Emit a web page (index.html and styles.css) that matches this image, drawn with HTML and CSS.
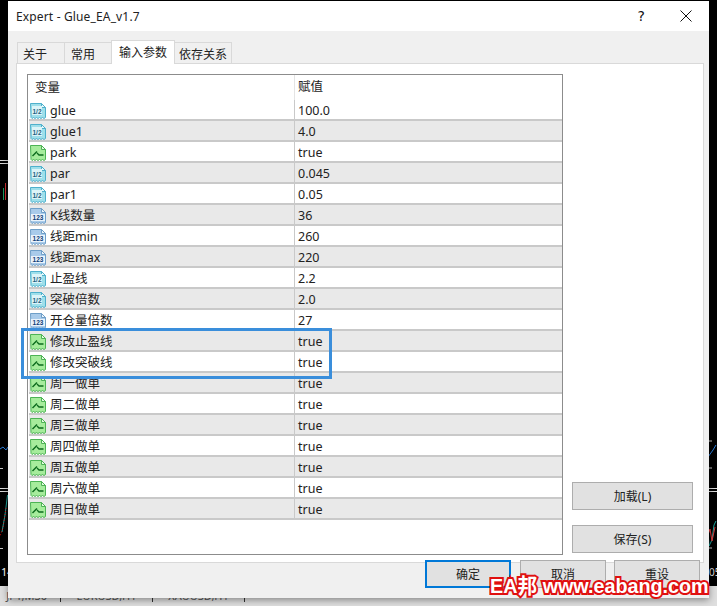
FILE: index.html
```html
<!DOCTYPE html>
<html lang="zh">
<head>
<meta charset="utf-8">
<title>Expert - Glue_EA_v1.7</title>
<link rel="stylesheet" href="styles.css">
</head>
<body>
<svg width="0" height="0" class="defs">
  <defs>
    <symbol id="i-half" viewBox="0 0 16 16">
      <path d="M.5 .5h11l4 4v10l-1.500 1-1.500-1-1.500 1-1.500-1-1.500 1-1.500-1-1.500 1-1.500-1-1.500 1-1-1z" fill="#9fdfea" stroke="#4fb0cc"/>
      <path d="M11.500 .5v4h4z" fill="#e8f8fb" stroke="#4fb0cc"/>
      <rect x="2" y="3" width="10" height="9" fill="#dcf4f8"/>
      <text x="7" y="10.500" class="ico-text half-text" text-anchor="middle">1/2</text>
    </symbol>
    <symbol id="i-bool" viewBox="0 0 16 16">
      <path d="M.5 .5h11l4 4v10l-1.500 1-1.500-1-1.500 1-1.500-1-1.500 1-1.500-1-1.500 1-1.500-1-1.500 1-1-1z" fill="#a6ec9c" stroke="#4db355"/>
      <path d="M11.500 .5v4h4z" fill="#e6fbe1" stroke="#4db355"/>
      <path d="M2.500 11l4.500-4.500" fill="none" stroke="#0c6a1d" stroke-width="1.500"/>
      <path d="M7 8l2 2h4.500" fill="none" stroke="#0c6a1d" stroke-width="1.300"/>
    </symbol>
    <symbol id="i-int" viewBox="0 0 16 16">
      <path d="M.5 .5h11l4 4v10l-1.500 1-1.500-1-1.500 1-1.500-1-1.500 1-1.500-1-1.500 1-1.500-1-1.500 1-1-1z" fill="#a9cbea" stroke="#6f9fc8"/>
      <path d="M11.500 .5v4h4z" fill="#edf5fc" stroke="#6f9fc8"/>
      <rect x="1" y="6" width="14" height="7" fill="#eaf3fb"/>
      <text x="8" y="12" class="ico-text int-text" text-anchor="middle">123</text>
    </symbol>
  </defs>
</svg>

<div class="desktop">
  <div class="chart chart-left">
    <svg viewBox="0 0 8 598" width="8" height="598" class="chart-svg">
      <path d="M0 160.500h8M0 163.500h8M0 488.500h8M0 491.500h8" stroke="#ddd" fill="none"/>
      <path d="M0 468.500h3M0 548.500h3" stroke="#ccc" fill="none"/>
      <path d="M5.500 183v17" stroke="#d03030" fill="none"/>
      <path d="M3.500 188v12" stroke="#1f9a60" fill="none"/>
      <path d="M0 449l3-2 3 3 2-3" stroke="#2c80e0" fill="none"/>
      <path d="M7.500 495L5 515 2 532" stroke="#1fa8a0" fill="none"/>
      <path d="M6 508L3 528 0 536" stroke="#f01010" fill="none" stroke-dasharray="1 2"/>
    </svg>
    <span class="axis-left">14</span>
  </div>
  <div class="chart chart-right">
    <svg viewBox="0 0 9 598" width="9" height="598" class="chart-svg">
      <path d="M1 441h3M1 468h3M0 548h4" stroke="#ccc" fill="none"/>
      <path d="M0 457l5-7 3-5" stroke="#2c80e0" fill="none"/>
      <path d="M0 488.500h9M0 491.500h9" stroke="#ddd" fill="none"/>
      <path d="M0 530l1 16 3-6 2-15 2-4" stroke="#1fa8a0" fill="none"/>
      <path d="M0 535l2-6 2 12 3-14" stroke="#e03a3a" fill="none"/>
    </svg>
    <span class="axis-right">05</span>
  </div>
  <div class="tabstrip">
    <span class="strip-item">JPY,M30</span>
    <span class="strip-item">EURUSD,H1</span>
    <span class="strip-item">XAUUSD,H1</span>
  </div>
</div>

<div class="window">
  <div class="titlebar">
    <span class="title">Expert - Glue_EA_v1.7</span>
    <span class="help">?</span>
    <svg class="close" width="12" height="12" viewBox="0 0 12 12"><path d="M.5.5l11 11M11.500.5l-11 11" stroke="#111" fill="none"/></svg>
  </div>
  <div class="client">
    <div class="tabs">
      <div class="tab t1">关于</div>
      <div class="tab t2">常用</div>
      <div class="tab active">输入参数</div>
      <div class="tab t4">依存关系</div>
    </div>
    <div class="panel">
      <div class="list">
        <div class="row head"><div class="name">变量</div><div class="val">赋值</div></div>
        <div class="row"><div class="name"><svg class="ico"><use href="#i-half"/></svg>glue</div><div class="val">100.0</div></div>
        <div class="row alt"><div class="name"><svg class="ico"><use href="#i-half"/></svg>glue1</div><div class="val">4.0</div></div>
        <div class="row"><div class="name"><svg class="ico"><use href="#i-bool"/></svg>park</div><div class="val">true</div></div>
        <div class="row alt"><div class="name"><svg class="ico"><use href="#i-half"/></svg>par</div><div class="val">0.045</div></div>
        <div class="row"><div class="name"><svg class="ico"><use href="#i-half"/></svg>par1</div><div class="val">0.05</div></div>
        <div class="row alt"><div class="name"><svg class="ico"><use href="#i-int"/></svg>K线数量</div><div class="val">36</div></div>
        <div class="row"><div class="name"><svg class="ico"><use href="#i-int"/></svg>线距min</div><div class="val">260</div></div>
        <div class="row alt"><div class="name"><svg class="ico"><use href="#i-int"/></svg>线距max</div><div class="val">220</div></div>
        <div class="row"><div class="name"><svg class="ico"><use href="#i-half"/></svg>止盈线</div><div class="val">2.2</div></div>
        <div class="row alt"><div class="name"><svg class="ico"><use href="#i-half"/></svg>突破倍数</div><div class="val">2.0</div></div>
        <div class="row"><div class="name"><svg class="ico"><use href="#i-int"/></svg>开仓量倍数</div><div class="val">27</div></div>
        <div class="row alt"><div class="name"><svg class="ico"><use href="#i-bool"/></svg>修改止盈线</div><div class="val">true</div></div>
        <div class="row"><div class="name"><svg class="ico"><use href="#i-bool"/></svg>修改突破线</div><div class="val">true</div></div>
        <div class="row alt"><div class="name"><svg class="ico"><use href="#i-bool"/></svg>周一做单</div><div class="val">true</div></div>
        <div class="row"><div class="name"><svg class="ico"><use href="#i-bool"/></svg>周二做单</div><div class="val">true</div></div>
        <div class="row alt"><div class="name"><svg class="ico"><use href="#i-bool"/></svg>周三做单</div><div class="val">true</div></div>
        <div class="row"><div class="name"><svg class="ico"><use href="#i-bool"/></svg>周四做单</div><div class="val">true</div></div>
        <div class="row alt"><div class="name"><svg class="ico"><use href="#i-bool"/></svg>周五做单</div><div class="val">true</div></div>
        <div class="row"><div class="name"><svg class="ico"><use href="#i-bool"/></svg>周六做单</div><div class="val">true</div></div>
        <div class="row alt"><div class="name"><svg class="ico"><use href="#i-bool"/></svg>周日做单</div><div class="val">true</div></div>
      </div>
      <div class="side">
        <button class="btn side-btn">加载(L)</button>
        <button class="btn side-btn">保存(S)</button>
      </div>
    </div>
    <div class="footer">
      <button class="btn foot-btn default">确定</button>
      <button class="btn foot-btn">取消</button>
      <button class="btn foot-btn">重设</button>
    </div>
  </div>
</div>

<div class="highlight"></div>
<div class="watermark">EA邦 www.eabang.com</div>
</body>
</html>
```
FILE: styles.css
```css
* { box-sizing: border-box; }
html, body { margin: 0; padding: 0; }
body {
  width: 717px;
  height: 606px;
  overflow: hidden;
  position: relative;
  background: #000;
  font-family: "Noto Sans", "Noto Sans CJK SC", sans-serif;
  font-size: 12px;
  color: #111;
}
.defs { position: absolute; }

.desktop { position: absolute; inset: 0; background: #000; }
.chart { position: absolute; top: 0; height: 586px; background: #000; overflow: hidden; }
.chart-left { left: 0; width: 8px; }
.chart-right { right: 0; width: 9px; }
.chart-svg { display: block; }
.axis-left { position: absolute; top: 566px; left: 1px; color: #fff; font-size: 11px; line-height: 12px; }
.axis-right { position: absolute; top: 566px; left: 1px; color: #ddd; font-size: 10px; line-height: 12px; }

.tabstrip {
  position: absolute;
  left: 0; right: 0; bottom: 0;
  height: 20px;
  padding-top: 4px;
  background: #dedede;
  display: flex;
  color: #555;
  font-size: 11px;
  line-height: 11px;
}
.strip-item { width: 92px; text-align: center; border-right: 1px solid #333; height: 12px; }
.strip-item:first-child { width: 61px; text-align: right; padding-right: 13px; }

.window {
  position: absolute;
  left: 8px; top: 1px;
  width: 701px; height: 597px;
  background: #f0f0f0;
  box-shadow: 0 2px 7px rgba(0,0,0,.4);
  display: flex;
  flex-direction: column;
}
.titlebar {
  height: 30px;
  flex: none;
  background: #fff;
  display: flex;
  align-items: center;
  padding: 0 17px 0 8px;
}
.title { flex: 1; font-size: 12px; letter-spacing: .15px; color: #222; padding-top: 1px; }
.help { font-size: 14px; margin-right: 35px; font-family: "DejaVu Sans", sans-serif; }
.close { display: block; }

.client { flex: 1; position: relative; padding: 9px 5px 0 8px; display: flex; flex-direction: column; }

.tabs { display: flex; height: 24px; align-items: flex-end; flex: none; margin-left: 1px; position: relative; z-index: 1; }
.tab {
  height: 22px;
  border: 1px solid #d9d9d9;
  border-right: 0;
  background: #f0f0f0;
  line-height: 24px;
  color: #222;
  white-space: nowrap;
}
.t1 { width: 47px; padding-left: 5px; }
.t2 { width: 47px; padding-left: 6px; }
.active { width: 64px; height: 24px; background: #fff; border: 1px solid #d9d9d9; border-bottom: 0; line-height: 23px; padding-left: 7px; }
.t4 { width: 57px; border-left: 0; border-right: 1px solid #d9d9d9; padding-left: 4px; }

.panel {
  height: 500px;
  flex: none;
  margin-top: -1px;
  background: #fff;
  border: 1px solid #d9d9d9;
  display: flex;
  padding: 10px 10px 8px 10px;
  width: 688px;
  justify-content: space-between;
}
.list {
  width: 536px;
  height: 481px;
  border: 1px solid #8c8c8c;
  padding-left: 1px;
}
.row { display: flex; height: 21px; border-bottom: 2px solid #c9c9c9; line-height: 21px; font-size: 12.500px; }
.row.head { height: 25px; border-bottom: 0; line-height: 24px; }
.alt { background: #e9e9e9; }
.name { width: 266px; border-right: 1px solid #c9c9c9; display: flex; align-items: center; height: 21px; white-space: nowrap; color: #222; }
.head .name { padding-left: 6px; height: 25px; border-right-color: #e4e4e4; }
.val { flex: 1; padding-left: 3px; color: #222; }
.ico { width: 16px; height: 16px; margin: 1px 4px 0 1px; flex: none; }
.ico-text { font-family: "Liberation Sans", sans-serif; font-weight: 700; }
.half-text { font-size: 6.500px; fill: #1c5f80; }
.int-text { font-size: 6.500px; fill: #103f78; }

.side { display: flex; flex-direction: column; gap: 15px; padding-top: 408px; width: 121px; }
.btn {
  font-family: "Noto Sans", "Noto Sans CJK SC", sans-serif;
  font-size: 12px;
  color: #222;
  background: #e1e1e1;
  border: 1px solid #adadad;
  padding: 0;
  height: 28px;
}
.side-btn { width: 121px; flex: none; }

.footer { display: flex; height: 28px; margin-top: -3px; padding-left: 409px; gap: 9px; flex: none; position: relative; }
.foot-btn { width: 86px; }
.foot-btn + .foot-btn + .foot-btn { margin-left: -1px; }
.default { border: 2px solid #0078d7; }

.highlight {
  position: absolute;
  left: 21px; top: 328px;
  width: 311px; height: 51px;
  border: 3px solid #3a8edb;
}
.watermark {
  position: absolute;
  left: 490px; top: 572px;
  font-family: "Liberation Sans", "Noto Sans CJK SC", sans-serif;
  font-size: 21px;
  line-height: 28px;
  font-weight: 700;
  color: #fff;
  white-space: nowrap;
  -webkit-text-stroke: 4px #e01010;
  paint-order: stroke fill;
  transform: scaleX(.94);
  transform-origin: left center;
}
```
